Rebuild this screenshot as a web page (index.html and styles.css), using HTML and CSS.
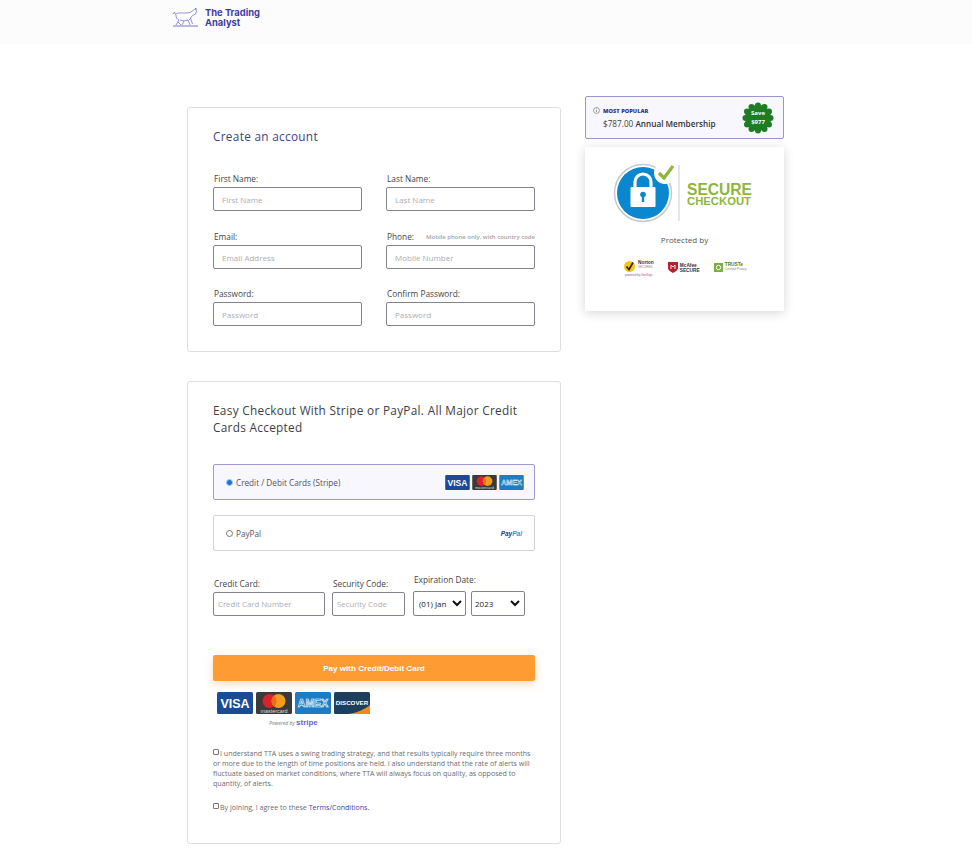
FILE: index.html
```html
<!DOCTYPE html>
<html lang="en">
<head>
    <meta charset="UTF-8">
    <meta name="viewport" content="width=device-width, initial-scale=1.0">
    <title>The Trading Analyst - Checkout</title>
    <link rel="stylesheet" href="styles.css">
</head>
<body>
    <header class="topbar">
        <a class="brand" href="#">
            <svg class="brand-bull" width="28" height="19" viewBox="0 0 28 19" fill="none" stroke="#6a66c8" stroke-width=".7">
                <path d="M1 6l1.500-2 1 2.500c2-2 4-1.500 6-1.500 5 0 8 .5 11-2 1-1 2-2 3-2l1 2-1 3-3 1.500-2 2.500 2 6"/>
                <path d="M23 1l1-1 .5 1.500M4 7c0 3 1 4 3 5l-3 5M8 12l4 1 4-1 2 5M12 13l-2 4M6 14l3 3M19 10l-2 2"/>
                <path d="M1 18h25" stroke-width=".9"/>
            </svg>
            <span class="brand-name">The Trading<br>Analyst</span>
        </a>
    </header>

    <main class="checkout">
        <div class="col-left">
            <section class="card card-account">
                <h2 class="card-title">Create an account</h2>
                <div class="account-grid">
                    <div class="field">
                        <label for="first">First Name:</label>
                        <input id="first" type="text" placeholder="First Name">
                    </div>
                    <div class="field">
                        <label for="last">Last Name:</label>
                        <input id="last" type="text" placeholder="Last Name">
                    </div>
                    <div class="field">
                        <label for="email">Email:</label>
                        <input id="email" type="text" placeholder="Email Address">
                    </div>
                    <div class="field">
                        <div class="label-row">
                            <label for="phone">Phone:</label>
                            <span class="hint">Mobile phone only, with country code</span>
                        </div>
                        <input id="phone" type="text" placeholder="Mobile Number">
                    </div>
                    <div class="field">
                        <label for="pass">Password:</label>
                        <input id="pass" type="text" placeholder="Password">
                    </div>
                    <div class="field">
                        <label for="confirm">Confirm Password:</label>
                        <input id="confirm" type="text" placeholder="Password">
                    </div>
                </div>
            </section>

            <section class="card card-payment">
                <h2 class="card-title dark">Easy Checkout With Stripe or PayPal. All Major Credit Cards Accepted</h2>

                <div class="pay-option active">
                    <span class="radio checked"></span>
                    <span class="pay-name">Credit / Debit Cards (Stripe)</span>
                    <span class="pay-logos">
                        <svg width="25" height="15" viewBox="0 0 36 22">
                            <rect width="36" height="22" rx="1.500" fill="#1a4b97"/>
                            <text x="18" y="16" text-anchor="middle" font-family="Liberation Sans" font-size="12.500" font-weight="700" fill="#fff">VISA</text>
                        </svg>
                        <svg width="25" height="15" viewBox="0 0 36 22">
                            <rect width="36" height="22" rx="1.500" fill="#3a3a3a"/>
                            <circle cx="13.500" cy="9" r="7" fill="#d9222a"/>
                            <circle cx="22.500" cy="9" r="7" fill="#f59c1a"/>
                            <path d="M18 3.600a7 7 0 0 1 0 10.800a7 7 0 0 1 0-10.800z" fill="#ee6a1f"/>
                            <text x="18" y="20.500" text-anchor="middle" font-family="Liberation Sans" font-size="5.400" fill="#ddd">mastercard</text>
                        </svg>
                        <svg width="25" height="15" viewBox="0 0 36 22">
                            <rect width="36" height="22" rx="1.500" fill="#1c7cc4"/>
                            <text x="18" y="15" text-anchor="middle" font-family="Liberation Sans" font-size="10.500" font-weight="700" fill="#1c7cc4" stroke="#fff" stroke-width=".6">AMEX</text>
                        </svg>
                    </span>
                </div>
                <div class="pay-option">
                    <span class="radio"></span>
                    <span class="pay-name">PayPal</span>
                    <span class="paypal"><b>Pay</b><i>Pal</i></span>
                </div>

                <div class="card-fields">
                    <div class="field f-number">
                        <label for="cc">Credit Card:</label>
                        <input id="cc" type="text" placeholder="Credit Card Number">
                    </div>
                    <div class="field f-code">
                        <label for="cvc">Security Code:</label>
                        <input id="cvc" type="text" placeholder="Security Code">
                    </div>
                    <div class="field f-exp">
                        <label for="month">Expiration Date:</label>
                        <div class="exp-row">
                            <div class="select s-month" id="month">(01) Jan
                                <svg width="10" height="7" viewBox="0 0 10 7"><path d="M1 1l4 4 4-4" fill="none" stroke="#111" stroke-width="2"/></svg>
                            </div>
                            <div class="select s-year">2023
                                <svg width="10" height="7" viewBox="0 0 10 7"><path d="M1 1l4 4 4-4" fill="none" stroke="#111" stroke-width="2"/></svg>
                            </div>
                        </div>
                    </div>
                </div>

                <button class="pay-btn">Pay with Credit/Debit Card</button>

                <div class="accepted">
                    <div class="accepted-cards">
                        <svg width="36" height="22" viewBox="0 0 36 22">
                            <rect width="36" height="22" rx="1.500" fill="#1a4b97"/>
                            <text x="18" y="16" text-anchor="middle" font-family="Liberation Sans" font-size="12.500" font-weight="700" fill="#fff">VISA</text>
                        </svg>
                        <svg width="36" height="22" viewBox="0 0 36 22">
                            <rect width="36" height="22" rx="1.500" fill="#3a3a3a"/>
                            <circle cx="13.500" cy="9" r="7" fill="#d9222a"/>
                            <circle cx="22.500" cy="9" r="7" fill="#f59c1a"/>
                            <path d="M18 3.600a7 7 0 0 1 0 10.800a7 7 0 0 1 0-10.800z" fill="#ee6a1f"/>
                            <text x="18" y="20.500" text-anchor="middle" font-family="Liberation Sans" font-size="5.400" fill="#ddd">mastercard</text>
                        </svg>
                        <svg width="36" height="22" viewBox="0 0 36 22">
                            <rect width="36" height="22" rx="1.500" fill="#1c7cc4"/>
                            <text x="18" y="15" text-anchor="middle" font-family="Liberation Sans" font-size="10.500" font-weight="700" fill="#1c7cc4" stroke="#fff" stroke-width=".6">AMEX</text>
                        </svg>
                        <svg width="36" height="22" viewBox="0 0 36 22">
                            <rect width="36" height="22" rx="1.500" fill="#1d3f5e"/>
                            <path d="M14 22c9-1 17-5 22-9v7.500a1.500 1.500 0 0 1-1.500 1.500z" fill="#f08a1d"/>
                            <text x="18" y="13" text-anchor="middle" font-family="Liberation Sans" font-size="6.200" font-weight="700" fill="#fff">DISCOVER</text>
                        </svg>
                    </div>
                    <div class="powered">Powered by <b>stripe</b></div>
                </div>

                <p class="legal"><span class="check"></span>I understand TTA uses a swing trading strategy, and that results typically require three months or more due to the length of time positions are held. I also understand that the rate of alerts will fluctuate based on market conditions, where TTA will always focus on quality, as opposed to quantity, of alerts.</p>
                <p class="legal terms"><span class="check"></span>By joining, I agree to these <a href="#">Terms/Conditions.</a></p>
            </section>
        </div>

        <aside class="col-right">
            <div class="promo">
                <div class="promo-text">
                    <div class="promo-tag">
                        <svg width="7" height="7" viewBox="0 0 7 7" fill="none" stroke="#666" stroke-width=".6"><circle cx="3.500" cy="3.500" r="3"/><path d="M3.500 3v2.200M3.500 1.500v.8"/></svg>
                        MOST POPULAR
                    </div>
                    <div class="promo-price">$787.00 <strong>Annual Membership</strong></div>
                </div>
                <div class="save-badge">
                    <svg width="32" height="32" viewBox="0 0 32 32">
                        <g fill="#1e7d22">
                            <circle cx="16" cy="16" r="13"/>
                            <circle cx="16" cy="3.500" r="3"/><circle cx="22.500" cy="5" r="3"/><circle cx="27" cy="9.500" r="3"/><circle cx="28.500" cy="16" r="3"/>
                            <circle cx="27" cy="22.500" r="3"/><circle cx="22.500" cy="27" r="3"/><circle cx="16" cy="28.500" r="3"/><circle cx="9.500" cy="27" r="3"/>
                            <circle cx="5" cy="22.500" r="3"/><circle cx="3.500" cy="16" r="3"/><circle cx="5" cy="9.500" r="3"/><circle cx="9.500" cy="5" r="3"/>
                        </g>
                    </svg>
                    <span class="save-text">Save<br>$977</span>
                </div>
            </div>

            <div class="secure-card">
                <svg class="secure-logo" width="140" height="60" viewBox="0 0 140 60">
                    <circle cx="30" cy="30" r="28.500" fill="#fff" stroke="#c3c9cf" stroke-width="1.500"/>
                    <circle cx="30" cy="30" r="26" fill="#0b87cf"/>
                    <circle cx="52" cy="10" r="11" fill="#fff"/>
                    <path d="M46 10l5 5 9-12" fill="none" stroke="#8db63c" stroke-width="3.200"/>
                    <path d="M22 25v-6a8 8 0 0 1 16 0v6" fill="none" stroke="#fff" stroke-width="3.200"/>
                    <rect x="17.500" y="24" width="25" height="20" rx="1" fill="#fff"/>
                    <circle cx="30" cy="31.500" r="2.800" fill="#0b87cf"/>
                    <rect x="28.800" y="32" width="2.400" height="7" fill="#0b87cf"/>
                    <path d="M66 2v56" stroke="#c9cdd0" stroke-width="1"/>
                    <text x="74" y="32" font-family="Liberation Sans" font-size="16" font-weight="700" fill="#8db63c" textLength="65" lengthAdjust="spacingAndGlyphs">SECURE</text>
                    <text x="74" y="42" font-family="Liberation Sans" font-size="10" font-weight="700" fill="#8db63c" textLength="64" lengthAdjust="spacingAndGlyphs">CHECKOUT</text>
                </svg>
                <div class="protected">Protected by</div>
                <div class="trust-row">
                    <div class="trust norton">
                        <svg width="13" height="13" viewBox="0 0 13 13"><circle cx="6.500" cy="6.500" r="5.500" fill="#f5c518"/><path d="M3.500 6.500l2.500 3 4-7" fill="none" stroke="#222" stroke-width="1.600"/></svg>
                        <span class="norton-name">Norton<small>SECURED</small></span>
                        <span class="norton-sub">powered by VeriSign</span>
                    </div>
                    <div class="trust mcafee">
                        <svg width="10" height="11" viewBox="0 0 10 11"><path d="M0 0h10v6c0 2-3 4-5 5-2-1-5-3-5-5z" fill="#b5202c"/><path d="M3 7V3l2 2 2-2v4" fill="none" stroke="#fff" stroke-width=".9"/></svg>
                        <span>McAfee<br>SECURE</span>
                    </div>
                    <div class="trust truste">
                        <svg width="9" height="9" viewBox="0 0 9 9"><rect width="9" height="9" fill="#7cb03a"/><circle cx="4.500" cy="4.500" r="2.200" fill="none" stroke="#fff"/></svg>
                        <span>TRUSTe<small>Certified Privacy</small></span>
                    </div>
                </div>
            </div>
        </aside>
    </main>
</body>
</html>
```

FILE: styles.css
```css
* {
    box-sizing: border-box;
}
body {
    margin: 0;
    background: #fff;
    font-family: "Open Sans", "Liberation Sans", sans-serif;
    color: #444;
}
a {
    text-decoration: none;
}
.topbar {
    height: 44px;
    background: #fcfcfc;
    padding: 7px 0 0 172px;
}
.brand {
    display: flex;
    align-items: flex-start;
    gap: 5px;
}
.brand-bull {
    margin-top: 1px;
}
.brand-name {
    font-family: Inter, "Liberation Sans", sans-serif;
    font-size: 9.400px;
    font-weight: 700;
    line-height: 10px;
    color: #3f3ba6;
    padding-top: 1px;
}
.checkout {
    display: flex;
    align-items: flex-start;
    gap: 24px;
    padding: 52px 0 19px 187px;
}
.col-left {
    width: 374px;
    margin-top: 11px;
}
.card {
    border: 1px solid #dedede;
    border-radius: 3px;
    padding: 0 25px;
    background: #fff;
}
.card-account {
    height: 245px;
    padding-top: 20px;
    margin-bottom: 29px;
}
.card-payment {
    height: 463px;
    padding-top: 20px;
}
.card-title {
    margin: 0;
    font-size: 11.800px;
    font-weight: 500;
    line-height: 17px;
    letter-spacing: .3px;
    color: #423f86;
}
.card-title.dark {
    width: 322px;
    color: #3d4145;
}
.account-grid {
    display: grid;
    grid-template-columns: 149px 149px;
    column-gap: 24px;
    row-gap: 20px;
    margin-top: 28px;
}
.card-account .field:nth-child(n+5) {
    margin-top: -1px;
}
.field label {
    display: block;
    font-size: 8.300px;
    font-weight: 400;
    line-height: 12px;
    margin: 0 0 2px 1px;
    color: #444;
}
.label-row {
    display: flex;
    justify-content: space-between;
    align-items: flex-start;
}
.hint {
    font-size: 6px;
    font-weight: 600;
    line-height: 12px;
    white-space: nowrap;
    color: #a2a2a8;
}
.field input {
    display: block;
    width: 100%;
    height: 24px;
    border: 1px solid #83838c;
    border-radius: 2px;
    padding: 0 8px;
    font-family: inherit;
    font-size: 8px;
    background: #fff;
    outline: none;
}
.field input::placeholder {
    color: #adadb2;
    opacity: 1;
}
.pay-option {
    display: flex;
    align-items: center;
    height: 36px;
    margin-top: 15px;
    border: 1px solid #d3d3d3;
    border-radius: 2px;
    padding: 0 10px 0 12px;
    background: #fff;
}
.card-title.dark + .pay-option {
    margin-top: 28px;
}
.pay-option.active {
    background: #f8f7fe;
    border-color: #9f9bcf;
}
.radio {
    width: 7px;
    height: 7px;
    margin-right: 3px;
    border: 1px solid #777;
    border-radius: 50%;
}
.radio.checked {
    background: #1a73d8;
    border-color: #a9c9ee;
}
.pay-name {
    font-size: 8.200px;
    color: #55555c;
}
.pay-logos {
    margin-left: auto;
    display: flex;
    gap: 2px;
}
.paypal {
    margin-left: auto;
    padding-right: 2px;
    font-family: "Liberation Sans", sans-serif;
    font-size: 6.500px;
    font-style: italic;
    font-weight: 700;
}
.paypal b {
    color: #243a7c;
}
.paypal i {
    color: #2b94d3;
}
.card-fields {
    display: flex;
    align-items: flex-end;
    margin-top: 23px;
}
.f-number {
    width: 112px;
    margin-right: 7px;
}
.f-code {
    width: 73px;
    margin-right: 8px;
}
.card-fields input {
    padding: 0 4px;
    font-size: 7.800px;
}
.card-fields .f-exp label {
    margin-bottom: 5px;
}
.exp-row {
    display: flex;
    gap: 5px;
}
.select {
    display: flex;
    justify-content: space-between;
    align-items: center;
    height: 25px;
    border: 1px solid #83838c;
    border-radius: 2px;
    font-size: 8px;
    color: #222;
    background: #fff;
}
.s-month {
    width: 53px;
    padding: 0 3px 0 5px;
}
.s-year {
    width: 54px;
    padding: 0 4px 0 3px;
}
.pay-btn {
    display: block;
    width: 322px;
    height: 26px;
    margin-top: 39px;
    border: none;
    border-radius: 2px;
    background: #ff9b33;
    box-shadow: 0 3px 8px rgba(255, 155, 51, .35);
    font-family: "Liberation Sans", sans-serif;
    font-size: 8.100px;
    font-weight: 700;
    color: #fff;
}
.accepted {
    width: 153px;
    margin: 11px 0 0 4px;
}
.accepted-cards {
    display: flex;
    justify-content: space-between;
}
.accepted-cards svg {
    display: block;
}
.powered {
    margin-top: 3px;
    text-align: center;
    font-size: 5px;
    font-style: italic;
    line-height: 11px;
    color: #777;
}
.powered b {
    font-family: "Liberation Sans", sans-serif;
    font-size: 8px;
    font-style: normal;
    color: #6a63d6;
}
.legal {
    margin: 19px 0 0;
    font-size: 7.080px;
    line-height: 10px;
    color: #6c6c70;
}
.legal.terms {
    margin-top: 14px;
}
.legal a {
    color: #3f3ba6;
}
.check {
    display: inline-block;
    width: 6px;
    height: 6px;
    margin-right: 1px;
    border: 1px solid #777;
    border-radius: 1px;
    vertical-align: 1px;
}
.col-right {
    width: 199px;
}
.promo {
    display: flex;
    justify-content: space-between;
    align-items: center;
    height: 43px;
    padding: 0 9px 0 7px;
    border: 1px solid #9a96cf;
    border-radius: 2px;
    background: #f8f7fe;
}
.promo-tag {
    display: flex;
    align-items: center;
    gap: 3px;
    font-size: 5.700px;
    font-weight: 800;
    color: #3b3780;
}
.promo-price {
    margin: 3px 0 0 10px;
    font-size: 8.200px;
    color: #444;
}
.promo-price strong {
    font-weight: 600;
    color: #333;
}
.save-badge {
    position: relative;
    width: 32px;
    height: 32px;
}
.save-text {
    position: absolute;
    inset: 0;
    display: flex;
    align-items: center;
    justify-content: center;
    text-align: center;
    font-size: 6px;
    font-weight: 700;
    line-height: 9px;
    color: #fff;
}
.secure-card {
    height: 164px;
    margin-top: 8px;
    padding-top: 16px;
    background: #fff;
    box-shadow: 0 2px 10px rgba(0, 0, 0, .16);
    text-align: center;
}
.secure-logo {
    display: block;
    margin-left: 28px;
}
.protected {
    margin-top: 11px;
    font-size: 8px;
    line-height: 12px;
    color: #555;
}
.trust-row {
    display: flex;
    align-items: flex-start;
    gap: 14px;
    margin: 14px 0 0 38px;
    font-family: "Liberation Sans", sans-serif;
    text-align: left;
}
.trust {
    display: flex;
    align-items: center;
    gap: 2px;
    font-size: 4.800px;
    line-height: 5px;
    font-weight: 700;
    color: #333;
}
.norton {
    position: relative;
    height: 17px;
    align-items: flex-start;
}
.norton-name small,
.truste small {
    display: block;
    font-size: 3px;
    font-weight: 400;
    color: #888;
}
.norton-sub {
    position: absolute;
    left: 2px;
    top: 14px;
    width: 40px;
    font-size: 3px;
    line-height: 3px;
    font-weight: 400;
    color: #b34a7a;
}
.mcafee,
.truste {
    margin-top: 2px;
}
.truste {
    color: #4d7a22;
}
```
